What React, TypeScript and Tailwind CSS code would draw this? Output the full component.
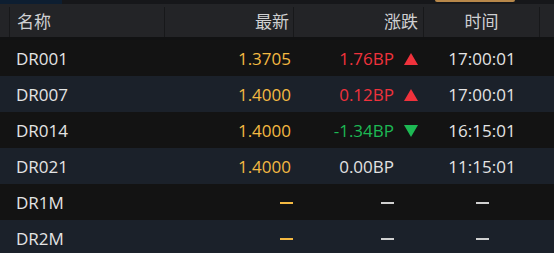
import React from 'react';

type Row = {
  name: string;
  last: string;
  change: string;
  dir: 'up' | 'down' | 'flat' | 'none';
  time: string;
};

const rows: Row[] = [
  { name: 'DR001', last: '1.3705', change: '1.76BP', dir: 'up', time: '17:00:01' },
  { name: 'DR007', last: '1.4000', change: '0.12BP', dir: 'up', time: '17:00:01' },
  { name: 'DR014', last: '1.4000', change: '-1.34BP', dir: 'down', time: '16:15:01' },
  { name: 'DR021', last: '1.4000', change: '0.00BP', dir: 'flat', time: '11:15:01' },
  { name: 'DR1M', last: '', change: '', dir: 'none', time: '' },
  { name: 'DR2M', last: '', change: '', dir: 'none', time: '' },
];

const Dash = ({ color }: { color: string }) => (
  <span className={`inline-block w-[13px] h-[2px] ${color}`} />
);

const Arrow = ({ dir }: { dir: Row['dir'] }) => {
  if (dir === 'up')
    return (
      <svg width="14" height="12" viewBox="0 0 14 12">
        <polygon points="7,0 14,12 0,12" fill="#f0323c" />
      </svg>
    );
  if (dir === 'down')
    return (
      <svg width="14" height="12" viewBox="0 0 14 12">
        <polygon points="0,0 14,0 7,12" fill="#1db954" />
      </svg>
    );
  return <span className="w-[14px]" />;
};

export default function App() {
  const changeColor = (d: Row['dir']) =>
    d === 'up' ? 'text-[#f0323c]' : d === 'down' ? 'text-[#1db954]' : 'text-[#e2e2e2]';

  return (
    <div
      className="w-[554px] h-[253px] overflow-hidden bg-[#111213] text-[17px]"
      style={{ fontFamily: '"Open Sans", "Noto Sans CJK SC", sans-serif' }}
    >
      {/* top strip */}
      <div className="h-[4px] flex bg-[#16171a]">
        <div className="w-[62px] bg-[#0d1e31]" />
        <div className="w-[373px]" />
        <div className="w-[80px] h-[2px] bg-[#b8884a] rounded-b-[2px]" />
      </div>

      {/* header */}
      <div className="h-[33px] flex bg-[#232427] text-[#cfd0d2] leading-[30px] pt-[3px]">
        <div className="w-[10px] border-r border-[#17181a]" />
        <div className="w-[155px] pl-[7px] border-r border-[#17181a]">名称</div>
        <div className="w-[129px] pr-[4px] text-right border-r border-[#17181a]">最新</div>
        <div className="w-[130px] pr-[5px] text-right border-r border-[#17181a]">涨跌</div>
        <div className="w-[116px] text-center border-r border-[#17181a]">时间</div>
        <div className="flex-1" />
      </div>

      <div className="h-[3px]" />

      {/* rows */}
      {rows.map((r, i) => (
        <div
          key={r.name}
          className={`h-[36px] pt-[2px] flex items-center ${i % 2 === 0 ? 'bg-[#131313]' : 'bg-[#1b212a]'}`}
        >
          <div className="w-[10px]" />
          <div className="w-[155px] pl-[6px] text-[#e4e4e4]">{r.name}</div>
          <div className="w-[129px] pr-[3px] flex justify-end text-[#f4b942]">
            {r.last ? r.last : <span className="mr-[-2px] flex"><Dash color="bg-[#f4b942]" /></span>}
          </div>
          <div className="w-[130px] pr-[6px] flex items-center justify-end">
            {r.change ? (
              <span className={changeColor(r.dir)}>{r.change}</span>
            ) : (
              <Dash color="bg-[#d0d0d0]" />
            )}
            <span className="w-[10px]" />
            <Arrow dir={r.dir} />
          </div>
          <div className="w-[116px] flex justify-center text-[#e4e4e4]">
            {r.time ? r.time : <Dash color="bg-[#d0d0d0]" />}
          </div>
        </div>
      ))}
    </div>
  );
}
